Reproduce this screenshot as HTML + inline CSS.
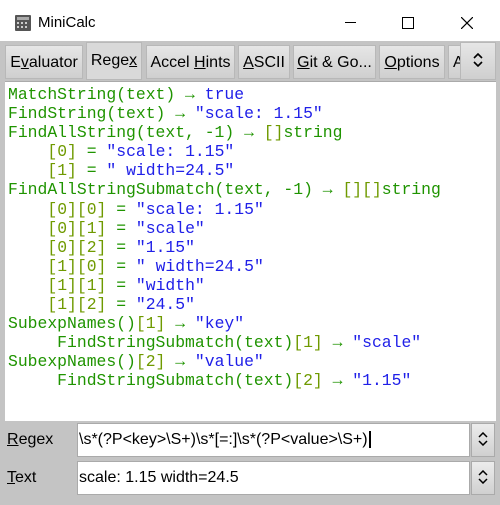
<!DOCTYPE html>
<html><head><style>
body{margin:0;width:500px;height:505px;background:#c4c4c4;position:relative;overflow:hidden;font-family:"Liberation Sans",sans-serif}
#title{position:absolute;left:0;top:0;width:500px;height:41px;background:#fff}
#title .t{position:absolute;left:38px;top:14px;font-size:15px;color:#000}
.tab{position:absolute;top:45px;height:34px;background:linear-gradient(#e6e6e6,#cfcfcf);border:1px solid #b8b8b8;box-sizing:border-box;font-size:16px;line-height:34px;text-align:center;color:#000;white-space:nowrap;overflow:hidden}
.tab.sel{top:42px;height:38px;background:#d9d9d9;line-height:36px}
#code{position:absolute;left:5px;top:81px;width:491px;height:339px;background:#fff;border-top:1px solid #aaa}
pre{margin:0;position:absolute;left:3px;top:3px;font-family:"Liberation Mono",monospace;font-size:16.4px;line-height:19.1px;color:#1f9400}
.b{color:#2020e8}.y{color:#6f9a00}
.lbl{position:absolute;left:7px;font-size:16px}
.fld{position:absolute;left:77px;width:393px;height:34px;background:#fff;border:1px solid #aaa;box-sizing:border-box;font-size:16px;line-height:32px;padding-left:1px;white-space:nowrap}
.spin{position:absolute;left:471px;width:24px;height:34px;background:linear-gradient(#ececec,#d0d0d0);border:1px solid #aaa;box-sizing:border-box}
.chev{position:absolute;left:50%;top:50%;margin-left:-5px;margin-top:-8px}
</style></head><body>
<div id="title">
<svg style="position:absolute;left:14px;top:14px" width="18" height="18"><rect x="1" y="1" width="16" height="16" fill="#555" rx="1"/><rect x="3" y="3" width="12" height="3" fill="#aaa"/><g fill="#ccc"><rect x="3" y="8" width="2" height="2"/><rect x="7" y="8" width="2" height="2"/><rect x="11" y="8" width="2" height="2"/><rect x="3" y="12" width="2" height="2"/><rect x="7" y="12" width="2" height="2"/><rect x="11" y="12" width="2" height="2"/></g></svg>
<div class="t">MiniCalc</div>
<div style="position:absolute;left:345px;top:22px;width:11px;height:1px;background:#000"></div>
<div style="position:absolute;left:402px;top:17px;width:10px;height:10px;border:1px solid #000"></div>
<svg style="position:absolute;left:461px;top:17px" width="12" height="12"><path d="M0 0L12 12M12 0L0 12" stroke="#000" stroke-width="1.2"/></svg>
</div>
<div class="tab" style="left:5px;width:78px">E<u>v</u>aluator</div>
<div class="tab sel" style="left:86px;width:56px">Rege<u>x</u></div>
<div class="tab" style="left:146px;width:89px">Accel <u>H</u>ints</div>
<div class="tab" style="left:238px;width:52px"><u>A</u>SCII</div>
<div class="tab" style="left:293px;width:83px"><u>G</u>it &amp; Go...</div>
<div class="tab" style="left:379px;width:66px"><u>O</u>ptions</div>
<div class="tab" style="left:448px;width:20px;text-align:left;padding-left:4px">A</div>
<div class="tab" style="left:460px;top:42px;height:38px;width:36px"><svg class="chev" width="10" height="14"><path d="M1 5L5 1L9 5M1 9L5 13L9 9" fill="none" stroke="#000" stroke-width="1.6"/></svg></div>
<div id="code"><pre>MatchString(text) → <span class="b">true</span>
FindString(text) → <span class="b">"scale: 1.15"</span>
FindAllString(text, -1) → <span class="y">[]</span>string
    <span class="y">[0]</span> = <span class="b">"scale: 1.15"</span>
    <span class="y">[1]</span> = <span class="b">" width=24.5"</span>
FindAllStringSubmatch(text, -1) → <span class="y">[][]</span>string
    <span class="y">[0][0]</span> = <span class="b">"scale: 1.15"</span>
    <span class="y">[0][1]</span> = <span class="b">"scale"</span>
    <span class="y">[0][2]</span> = <span class="b">"1.15"</span>
    <span class="y">[1][0]</span> = <span class="b">" width=24.5"</span>
    <span class="y">[1][1]</span> = <span class="b">"width"</span>
    <span class="y">[1][2]</span> = <span class="b">"24.5"</span>
SubexpNames()<span class="y">[1]</span> → <span class="b">"key"</span>
     FindStringSubmatch(text)<span class="y">[1]</span> → <span class="b">"scale"</span>
SubexpNames()<span class="y">[2]</span> → <span class="b">"value"</span>
     FindStringSubmatch(text)<span class="y">[2]</span> → <span class="b">"1.15"</span></pre></div>
<div class="lbl" style="top:431px"><u>R</u>egex</div>
<div class="fld" style="top:423px">\s*(?P&lt;key&gt;\S+)\s*[=:]\s*(?P&lt;value&gt;\S+)<span style="border-left:2px solid #000;margin-left:1px"></span></div>
<div class="spin" style="top:423px"><svg class="chev" width="10" height="14"><path d="M1 5L5 1L9 5M1 9L5 13L9 9" fill="none" stroke="#000" stroke-width="1.5"/></svg></div>
<div class="lbl" style="top:469px"><u>T</u>ext</div>
<div class="fld" style="top:461px">scale: 1.15 width=24.5</div>
<div class="spin" style="top:461px"><svg class="chev" width="10" height="14"><path d="M1 5L5 1L9 5M1 9L5 13L9 9" fill="none" stroke="#000" stroke-width="1.5"/></svg></div>
</body></html>
